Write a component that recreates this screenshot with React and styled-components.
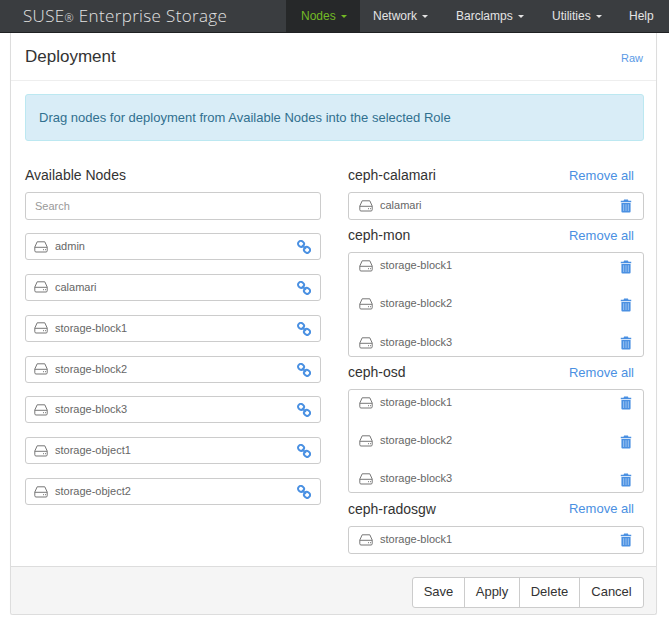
import styled, { createGlobalStyle } from "styled-components";

const available = [
  "admin",
  "calamari",
  "storage-block1",
  "storage-block2",
  "storage-block3",
  "storage-object1",
  "storage-object2",
];

const roles = [
  { name: "ceph-calamari", nodes: ["calamari"] },
  { name: "ceph-mon", nodes: ["storage-block1", "storage-block2", "storage-block3"] },
  { name: "ceph-osd", nodes: ["storage-block1", "storage-block2", "storage-block3"] },
  { name: "ceph-radosgw", nodes: ["storage-block1"] },
];

const menu = [
  { label: "Nodes", active: true, caret: true, width: 74 },
  { label: "Network", caret: true, width: 83 },
  { label: "Barclamps", caret: true, width: 96 },
  { label: "Utilities", caret: true, width: 77 },
  { label: "Help", width: 53 },
];

const HddIcon = () => (
  <HddSvg viewBox="0 0 14 12" aria-hidden="true">
    <path
      d="M3.2 .8h7.6L13.2 6v3.8a1.2 1.2 0 0 1-1.2 1.2H2a1.2 1.2 0 0 1-1.2-1.2V6z M.9 6.3h12.2"
      fill="none"
      stroke="currentColor"
      strokeWidth="1"
    />
    <path d="M9 8.7h1M11 8.7h1" stroke="currentColor" strokeWidth="1" />
  </HddSvg>
);

const LinkIcon = () => (
  <ActionSvg viewBox="0 0 15 15" aria-hidden="true">
    <g fill="none" stroke="currentColor" strokeWidth="2.1">
      <rect x="1.1" y="1.1" width="6.4" height="6" rx="2.8" transform="rotate(40 4.3 4.1)" />
      <rect x="7.5" y="7.6" width="6.4" height="6" rx="2.8" transform="rotate(40 10.7 10.6)" />
      <path d="M5.5 5.5l4 4" />
    </g>
  </ActionSvg>
);

const TrashIcon = () => (
  <ActionSvg viewBox="0 0 15 15" aria-hidden="true">
    <path d="M5.4 .6h4.2l.5 1.3h3v1.5H1.9V1.9h3z" fill="currentColor" />
    <path
      d="M2.6 4.2h9.8v9.2a1.1 1.1 0 0 1-1.1 1.1H3.7a1.1 1.1 0 0 1-1.1-1.1z"
      fill="currentColor"
    />
    <path d="M5 5.6v7.3M7.5 5.6v7.3M10 5.6v7.3" stroke="#a9cdf3" strokeWidth=".9" />
  </ActionSvg>
);

const App = () => {
  return (
    <>
      <GlobalStyle />
      <Navbar>
        <Brand>
          SUSE<BrandMark>®</BrandMark> Enterprise Storage
        </Brand>
        <NavMenu>
          {menu.map((item) => (
            <NavItem key={item.label} $active={item.active} $width={item.width}>
              {item.label}
              {item.caret && <Caret />}
            </NavItem>
          ))}
        </NavMenu>
      </Navbar>
      <Panel>
        <PanelHeader>
          <PanelTitle>Deployment</PanelTitle>
          <RawLink href="#">Raw</RawLink>
        </PanelHeader>
        <PanelBody>
          <Alert>Drag nodes for deployment from Available Nodes into the selected Role</Alert>
          <Columns>
            <Column>
              <SectionHead>
                <SectionTitle>Available Nodes</SectionTitle>
              </SectionHead>
              <SearchInput type="text" placeholder="Search" />
              <NodeList>
                {available.map((name) => (
                  <NodeCard key={name}>
                    <HddIcon />
                    <NodeName>{name}</NodeName>
                    <ActionIcon>
                      <LinkIcon />
                    </ActionIcon>
                  </NodeCard>
                ))}
              </NodeList>
            </Column>
            <Column>
              {roles.map((role) => (
                <Role key={role.name}>
                  <SectionHead>
                    <SectionTitle>{role.name}</SectionTitle>
                    <RemoveAll href="#">Remove all</RemoveAll>
                  </SectionHead>
                  <RoleBox>
                    {role.nodes.map((name) => (
                      <RoleNode key={name}>
                        <HddIcon />
                        <RoleNodeName>{name}</RoleNodeName>
                        <ActionIcon>
                          <TrashIcon />
                        </ActionIcon>
                      </RoleNode>
                    ))}
                  </RoleBox>
                </Role>
              ))}
            </Column>
          </Columns>
        </PanelBody>
        <PanelFooter>
          <ButtonGroup>
            <FooterButton $width={51}>Save</FooterButton>
            <FooterButton $width={55}>Apply</FooterButton>
            <FooterButton $width={60}>Delete</FooterButton>
            <FooterButton $width={64}>Cancel</FooterButton>
          </ButtonGroup>
        </PanelFooter>
      </Panel>
    </>
  );
};

const GlobalStyle = createGlobalStyle`
  html, body {
    margin: 0;
    padding: 0;
    background: #fff;
  }
  body {
    font-family: "Liberation Sans", Arial, sans-serif;
    font-size: 12px;
    color: #333;
  }
  * {
    box-sizing: border-box;
  }
`;

const Navbar = styled.div`
  display: flex;
  justify-content: space-between;
  height: 33px;
  background: #3a3d40;
  border-bottom: 1px solid #1f2123;
`;
const Brand = styled.div`
  padding-left: 23px;
  font-family: "Open Sans", sans-serif;
  font-size: 17px;
  font-weight: 300;
  letter-spacing: 0.35px;
  line-height: 32px;
  color: #e2e2e2;
  white-space: nowrap;
`;
const BrandMark = styled.span`
  font-size: 11px;
`;
const NavMenu = styled.div`
  display: flex;
`;
const NavItem = styled.div`
  display: flex;
  align-items: center;
  width: ${(p) => p.$width}px;
  padding-left: ${(p) => (p.$active ? 15 : 13)}px;
  line-height: 32px;
  height: 32px;
  font-size: 12px;
  color: ${(p) => (p.$active ? "#73ba25" : "#e4e4e4")};
  background: ${(p) => (p.$active ? "#262829" : "transparent")};
`;
const Caret = styled.span`
  margin-left: 5px;
  border-top: 3px solid currentColor;
  border-left: 3px solid transparent;
  border-right: 3px solid transparent;
`;
const Panel = styled.div`
  width: 647px;
  height: 582px;
  margin-left: 10px;
  display: flex;
  flex-direction: column;
  background: #fff;
  border: 1px solid #ddd;
  border-top: none;
  border-radius: 0 0 3px 3px;
  box-shadow: 0 1px 1px rgba(0, 0, 0, 0.05);
`;
const PanelHeader = styled.div`
  display: flex;
  justify-content: space-between;
  align-items: center;
  height: 48px;
  padding: 0 13px 0 14px;
  border-bottom: 1px solid #eee;
`;
const PanelTitle = styled.h3`
  margin: 0;
  font-size: 17px;
  font-weight: 400;
  color: #333;
`;
const RawLink = styled.a`
  margin-top: 2px;
  font-size: 11px;
  color: #5b9ae6;
  text-decoration: none;
`;
const PanelBody = styled.div`
  flex: 1;
  padding: 13px 12px 0 14px;
`;
const Alert = styled.div`
  height: 47px;
  padding: 0 13px;
  line-height: 46px;
  font-size: 13px;
  color: #31708f;
  background: #d9edf7;
  border: 1px solid #bce8f1;
  border-radius: 3px;
`;
const Columns = styled.div`
  display: grid;
  grid-template-columns: 296px 296px;
  column-gap: 27px;
  margin-top: 24px;
`;
const Column = styled.div`
  display: flex;
  flex-direction: column;
`;
const SectionHead = styled.div`
  display: flex;
  justify-content: space-between;
  align-items: center;
  height: 20px;
  margin-bottom: 7px;
  padding-right: 10px;
`;
const SectionTitle = styled.span`
  font-size: 14px;
  color: #333;
`;
const RemoveAll = styled.a`
  font-size: 13px;
  color: #4a90e2;
  text-decoration: none;
`;
const SearchInput = styled.input`
  display: block;
  width: 100%;
  height: 28px;
  padding: 0 9px;
  font-family: inherit;
  font-size: 11px;
  color: #555;
  border: 1px solid #ccc;
  border-radius: 3px;
  outline: none;
  &::placeholder {
    color: #999;
    opacity: 1;
  }
`;
const NodeList = styled.div`
  display: flex;
  flex-direction: column;
  gap: 13.85px;
  margin-top: 13px;
`;
const NodeCard = styled.div`
  display: flex;
  align-items: center;
  height: 27px;
  padding: 0 9px 0 8px;
  border: 1px solid #ccc;
  border-radius: 3px;
  color: #666;
`;
const NodeName = styled.span`
  flex: 1;
  margin-left: 7px;
  margin-bottom: 1px;
  font-size: 11px;
  color: #666;
`;
const RoleNodeName = styled(NodeName)`
  margin-bottom: 2px;
`;
const HddSvg = styled.svg`
  width: 14px;
  height: 12px;
  flex: none;
  color: #777;
`;
const ActionIcon = styled.span`
  display: flex;
  color: #4a90e2;
  margin-top: 1px;
`;
const ActionSvg = styled.svg`
  width: 14px;
  height: 14px;
`;
const Role = styled.div`
  margin-bottom: 5.5px;
`;
const RoleBox = styled.div`
  display: flex;
  flex-direction: column;
  gap: 12.5px;
  border: 1px solid #ccc;
  border-radius: 3px;
`;
const RoleNode = styled.div`
  display: flex;
  align-items: center;
  height: 25.75px;
  padding: 0 10px 0 10px;
`;
const PanelFooter = styled.div`
  display: flex;
  justify-content: flex-end;
  align-items: flex-start;
  height: 48px;
  padding: 10px 12px 0 0;
  background: #f5f5f5;
  border-top: 1px solid #ddd;
  border-radius: 0 0 3px 3px;
`;
const ButtonGroup = styled.div`
  display: flex;
  height: 31px;
  border: 1px solid #ccc;
  border-radius: 3px;
  background: #fff;
`;
const FooterButton = styled.div`
  display: flex;
  align-items: center;
  justify-content: center;
  width: ${(p) => p.$width}px;
  padding-bottom: 2px;
  font-size: 13px;
  color: #333;
  & + & {
    border-left: 1px solid #ccc;
  }
`;

export default App;
